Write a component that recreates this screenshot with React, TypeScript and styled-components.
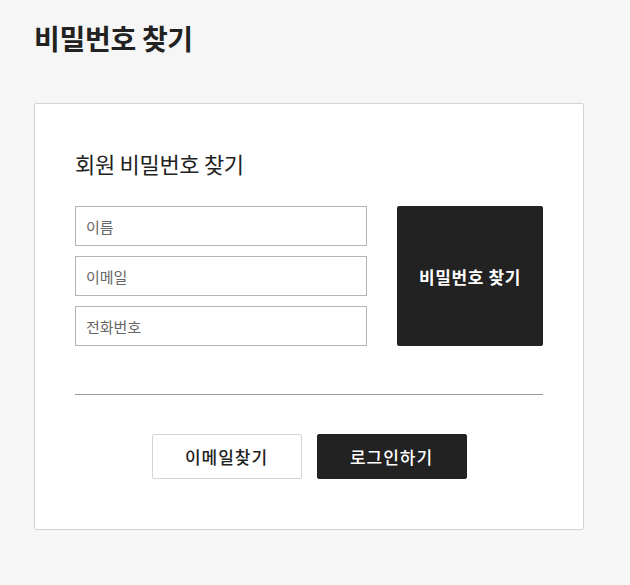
import React from 'react';
import { styled, createGlobalStyle } from 'styled-components';

const GlobalStyle = createGlobalStyle`
  html, body {
    margin: 0;
    padding: 0;
    background: #f6f6f6;
  }
  body {
    font-family: "Noto Sans CJK KR", "Noto Sans", sans-serif;
    color: #222;
  }
  * {
    box-sizing: border-box;
  }
`;

const Page = styled.div`
  padding: 18px 46px 55px 34px;
`;

const PageTitle = styled.h1`
  margin: 0;
  font-size: 28px;
  font-weight: 700;
  line-height: 40px;
  color: #222;
  letter-spacing: -0.3px;
`;

const Card = styled.section`
  margin-top: 45px;
  width: 550px;
  background: #fff;
  border: 1px solid #d4d4d4;
  border-radius: 2px;
  padding: 42px 40px 50px;
`;

const CardTitle = styled.h2`
  margin: 0 0 26px;
  font-size: 22px;
  font-weight: 400;
  line-height: 34px;
  color: #222;
  letter-spacing: -0.3px;
`;

const FormRow = styled.div`
  display: flex;
  gap: 30px;
`;

const Fields = styled.div`
  flex: 1;
  display: flex;
  flex-direction: column;
  gap: 10px;
`;

const Field = styled.input`
  height: 40px;
  width: 100%;
  border: 1px solid #b5b5b5;
  padding: 0 10px;
  font-family: inherit;
  font-size: 15px;
  color: #222;
  outline: none;
  &::placeholder {
    color: #666;
  }
`;

const SubmitButton = styled.button`
  width: 146px;
  border: 0;
  border-radius: 2px;
  background: #222;
  color: #fff;
  font-family: inherit;
  font-size: 17px;
  font-weight: 700;
  letter-spacing: 0.6px;
  cursor: pointer;
`;

const Divider = styled.hr`
  margin: 48px 0 39px;
  border: 0;
  border-top: 1px solid #999;
`;

const Actions = styled.div`
  display: flex;
  justify-content: center;
  gap: 15px;
`;

const ActionButton = styled.button<{ $dark?: boolean }>`
  width: 150px;
  height: 45px;
  border-radius: 2px;
  border: 1px solid ${(p) => (p.$dark ? '#222' : '#d4d4d4')};
  background: ${(p) => (p.$dark ? '#222' : '#fff')};
  color: ${(p) => (p.$dark ? '#fff' : '#222')};
  font-family: inherit;
  font-size: 17px;
  font-weight: 500;
  letter-spacing: 1px;
  cursor: pointer;
`;

export default function App() {
  return (
    <>
      <GlobalStyle />
      <Page>
        <PageTitle>비밀번호 찾기</PageTitle>
        <Card>
          <CardTitle>회원 비밀번호 찾기</CardTitle>
          <FormRow>
            <Fields>
              <Field placeholder="이름" />
              <Field placeholder="이메일" />
              <Field placeholder="전화번호" />
            </Fields>
            <SubmitButton>비밀번호 찾기</SubmitButton>
          </FormRow>
          <Divider />
          <Actions>
            <ActionButton>이메일찾기</ActionButton>
            <ActionButton $dark>로그인하기</ActionButton>
          </Actions>
        </Card>
      </Page>
    </>
  );
}
